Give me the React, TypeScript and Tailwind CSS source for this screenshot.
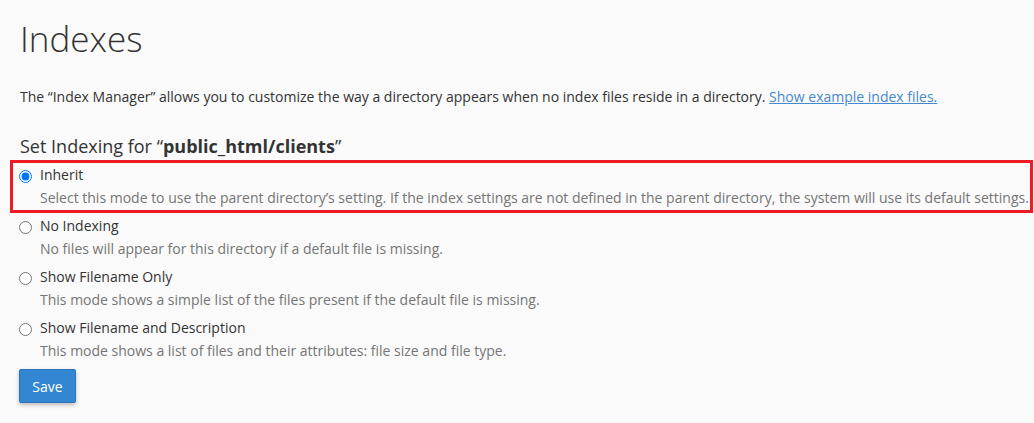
import React from 'react';

const options = [
    {
        id: 'inherit',
        label: 'Inherit',
        desc: 'Select this mode to use the parent directory’s setting. If the index settings are not defined in the parent directory, the system will use its default settings.',
    },
    {
        id: 'none',
        label: 'No Indexing',
        desc: 'No files will appear for this directory if a default file is missing.',
    },
    {
        id: 'filename',
        label: 'Show Filename Only',
        desc: 'This mode shows a simple list of the files present if the default file is missing.',
    },
    {
        id: 'description',
        label: 'Show Filename and Description',
        desc: 'This mode shows a list of files and their attributes: file size and file type.',
    },
];

function Option({ id, label, desc, checked }: { id: string; label: string; desc: string; checked?: boolean }) {
    return (
        <label htmlFor={id} className="flex items-start">
            <input
                id={id}
                type="radio"
                name="indexing"
                defaultChecked={checked}
                className="m-0 mt-[5px] ml-[-1px] mr-[8px] h-[13px] w-[13px] shrink-0"
            />
            <div className="flex flex-col">
                <span className="text-[14px] leading-[20px] text-[#333]">{label}</span>
                <span className="mt-[3px] text-[14px] leading-[20px] text-[#757575]">{desc}</span>
            </div>
        </label>
    );
}

export default function App() {
    return (
        <div className="min-h-screen bg-[#fafafa] px-5 font-['Open_Sans',sans-serif] text-[#333]">
            <h1 className="pt-[19px] text-[35px] font-light leading-[40px]">Indexes</h1>

            <p className="mt-[28px] text-[14px] leading-[20px]">
                The “Index Manager” allows you to customize the way a directory appears when no index files reside in a
                directory.{' '}
                <a href="#" className="text-[#4689cf] underline">
                    Show example index files.
                </a>
            </p>

            <h2 className="mt-[29px] text-[18px] leading-[20px]">
                Set Indexing for “<b className="font-bold">public_html/clients</b>”
            </h2>

            <div className="flex flex-col">
                <div className="mt-[4px] ml-[-10px] w-[1023px] border-[3px] border-[#ed1c24] py-[2px] pl-[7px]">
                    <Option {...options[0]} checked />
                </div>
                <div className="mt-[3px]">
                    <Option {...options[1]} />
                </div>
                <div className="mt-[8px]">
                    <Option {...options[2]} />
                </div>
                <div className="mt-[8px]">
                    <Option {...options[3]} />
                </div>
            </div>

            <button className="mt-[8px] ml-[-1px] h-[34px] w-[57px] rounded-[2px] border border-[#2b74bb] bg-[#3386d1] text-[14px] text-white shadow-[0_2px_4px_rgba(0,0,0,0.25)]">
                Save
            </button>
        </div>
    );
}
